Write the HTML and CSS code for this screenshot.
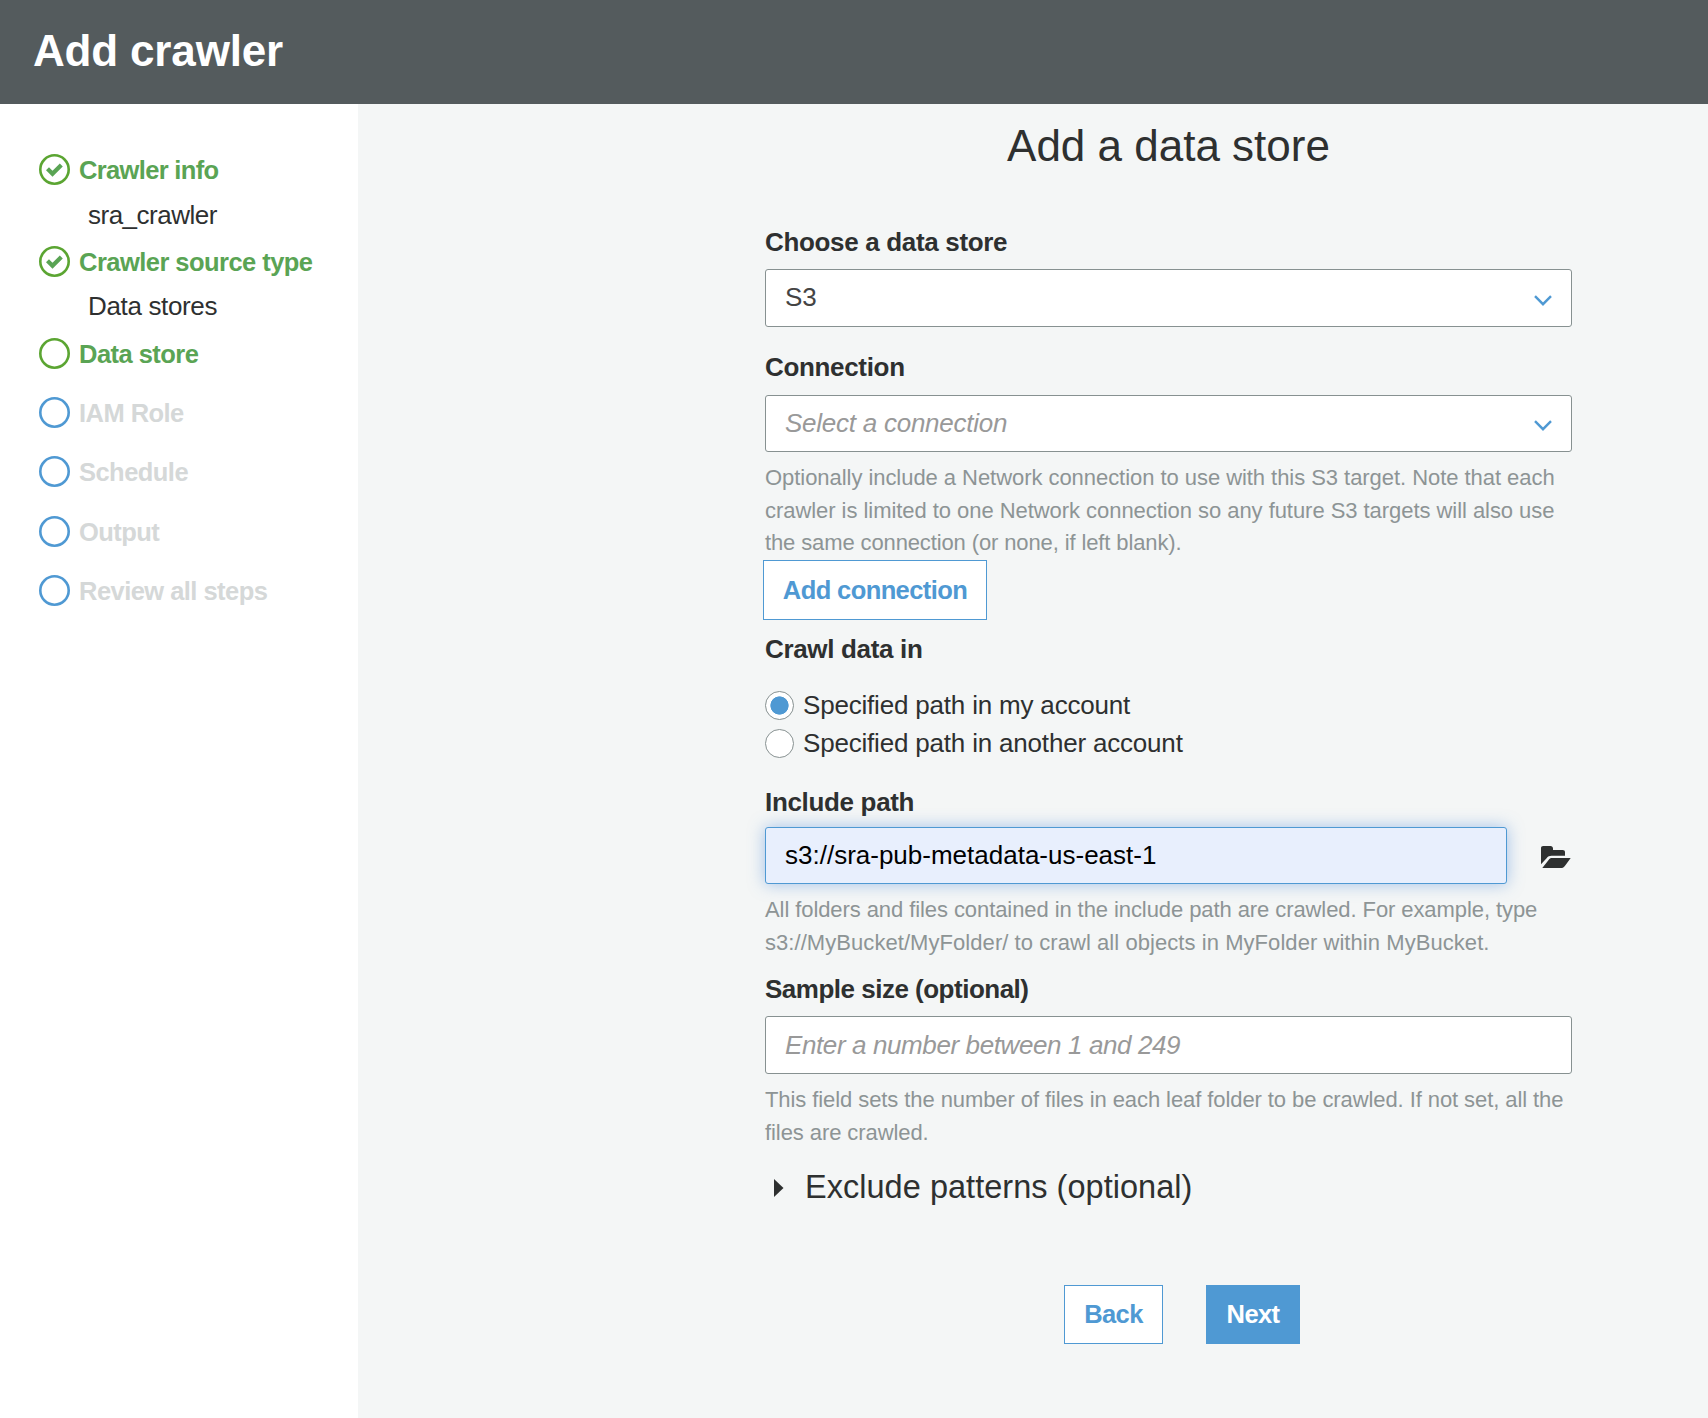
FILE: index.html
```
<!DOCTYPE html>
<html lang="en">
<head>
<meta charset="utf-8">
<title>Add crawler</title>
<link rel="stylesheet" href="styles.css">
</head>
<body>
<header class="topbar"><h1 class="topbar-title">Add crawler</h1></header>
<div class="layout">
  <nav class="steps">
    <div class="step done">
      <svg class="step-icon" viewBox="0 0 31 31"><circle cx="15.5" cy="15.5" r="14.2"/><path class="tick" d="M8.500 14.800l5 5 8.800-8.800"/></svg>
      <span class="w-info">Crawler info</span>
    </div>
    <div class="step-value w-name">sra_crawler</div>
    <div class="step done">
      <svg class="step-icon" viewBox="0 0 31 31"><circle cx="15.5" cy="15.5" r="14.2"/><path class="tick" d="M8.500 14.800l5 5 8.800-8.800"/></svg>
      <span>Crawler source type</span>
    </div>
    <div class="step-value">Data stores</div>
    <div class="step done current">
      <svg class="step-icon" viewBox="0 0 31 31"><circle cx="15.5" cy="15.5" r="14.2"/></svg>
      <span>Data store</span>
    </div>
    <div class="step pending">
      <svg class="step-icon" viewBox="0 0 31 31"><circle cx="15.5" cy="15.5" r="14.2"/></svg>
      <span>IAM Role</span>
    </div>
    <div class="step pending">
      <svg class="step-icon" viewBox="0 0 31 31"><circle cx="15.5" cy="15.5" r="14.2"/></svg>
      <span>Schedule</span>
    </div>
    <div class="step pending">
      <svg class="step-icon" viewBox="0 0 31 31"><circle cx="15.5" cy="15.5" r="14.2"/></svg>
      <span>Output</span>
    </div>
    <div class="step pending">
      <svg class="step-icon" viewBox="0 0 31 31"><circle cx="15.5" cy="15.5" r="14.2"/></svg>
      <span>Review all steps</span>
    </div>
  </nav>
  <main class="content">
    <form class="form">
      <h2 class="form-title">Add a data store</h2>

      <label class="label first">Choose a data store</label>
      <div class="field select tall">
        <span class="select-value">S3</span>
        <svg class="chevron" viewBox="0 0 18 11"><path d="M1 1.2l8 8 8-8"/></svg>
      </div>

      <label class="label connection">Connection</label>
      <div class="field select">
        <span class="placeholder">Select a connection</span>
        <svg class="chevron" viewBox="0 0 18 11"><path d="M1 1.2l8 8 8-8"/></svg>
      </div>
      <p class="help">Optionally include a Network connection to use with this S3 target. Note that each<br>crawler is limited to one Network connection so any future S3 targets will also use<br><span class="tight">the same connection (or none, if left blank).</span></p>
      <button type="button" class="button add">Add connection</button>

      <label class="label crawl">Crawl data in</label>
      <div class="radios">
        <div class="radio"><span class="radio-mark checked"></span><span>Specified path in my account</span></div>
        <div class="radio"><span class="radio-mark"></span><span>Specified path in another account</span></div>
      </div>

      <label class="label include">Include path</label>
      <div class="path-row">
        <div class="field focused">s3://sra-pub-metadata-us-east-1</div>
        <svg class="folder" viewBox="0 0 30 22"><path d="M0 18.2V2.2C0 .8.8 0 2.2 0h7.3C11 0 12 1 12 2.4V4h9.6C23.200 4 24 4.800 24 6.200V9.800H10.500C8.400 9.800 7 10.600 5.600 12.200Z"/><path d="M1.300 22 7.600 13.900C8.600 12.600 9.500 12 11 12H29.700L24.600 18.900C22.900 21.200 21.800 22 19.600 22Z"/></svg>
      </div>
      <p class="help files">All folders and files contained in the include path are crawled. For example, type<br><span class="loose">s3://MyBucket/MyFolder/ to crawl all objects in MyFolder within MyBucket.</span></p>

      <label class="label sample">Sample size (optional)</label>
      <div class="field tall"><span class="placeholder number">Enter a number between 1 and 249</span></div>
      <p class="help files">This field sets the number of files in each leaf folder to be crawled. If not set, all the<br>files are crawled.</p>

      <div class="exclude">
        <svg class="caret" viewBox="0 0 10 18"><path d="M0 0l9.500 9L0 18z"/></svg>
        <span>Exclude patterns (optional)</span>
      </div>

      <div class="actions">
        <button type="button" class="button back">Back</button>
        <button type="button" class="button next">Next</button>
      </div>
    </form>
  </main>
</div>
</body>
</html>
```
FILE: styles.css
```
* {
  box-sizing: border-box;
}

body {
  margin: 0;
  background: #f4f6f6;
  color: #2e3030;
  font-family: "Liberation Sans", Arial, sans-serif;
  font-size: 26px;
  min-height: 1418px;
  display: flex;
  flex-direction: column;
}

h1,
h2,
p {
  margin: 0;
}

.topbar {
  height: 104px;
  padding-left: 33px;
  background: #545b5d;
}

.topbar-title {
  color: #fff;
  font-size: 44px;
  line-height: 101px;
  letter-spacing: -0.17px;
}

.layout {
  flex: 1;
  display: flex;
}

.steps {
  width: 358px;
  padding: 43px 0 0 39px;
  background: #fff;
}

.step {
  display: flex;
  align-items: center;
  gap: 9px;
  height: 45.8px;
  font-size: 25.5px;
  font-weight: bold;
  letter-spacing: -0.54px;
  line-height: 32px;
  white-space: nowrap;
}

.step span {
  padding-top: 1px;
}

.step-icon {
  width: 31px;
  height: 31px;
  fill: none;
  stroke: #5ba532;
  stroke-width: 2.6;
}

.step-icon .tick {
  stroke: #5aa454;
  stroke-width: 4.2;
}

.done {
  color: #5aa454;
}

.w-info {
  letter-spacing: -0.66px;
}

.current {
  margin-bottom: 7px;
}

.pending {
  height: 59.3px;
  color: #d5d8d8;
}

.pending .step-icon {
  stroke: #4f99d3;
}

.step-value {
  height: 45.8px;
  line-height: 45.8px;
  padding-left: 49px;
  letter-spacing: -0.35px;
}

.w-name {
  letter-spacing: -0.5px;
}

.content {
  flex: 1;
  padding: 17px 136px 0 407px;
}

.form {
  width: 807px;
}

.form-title {
  font-size: 44px;
  font-weight: normal;
  line-height: 50px;
  text-align: center;
}

.label {
  display: block;
  font-weight: bold;
  line-height: 36px;
  letter-spacing: -0.33px;
}

.label.first {
  margin: 53px 0 9px;
}

.label.connection {
  margin: 22px 0 10px;
}

.label.crawl {
  margin: 11px 0 19px;
}

.label.include {
  margin: 22px 0 7px;
}

.label.sample {
  margin: 13px 0 9px;
  letter-spacing: -0.5px;
}

.field {
  height: 57px;
  padding: 0 19px;
  display: flex;
  align-items: center;
  border: 1px solid #879191;
  border-radius: 3px;
  background: #fff;
}

.tall {
  height: 58px;
}

.select {
  justify-content: space-between;
}

.select-value {
  padding-bottom: 2px;
  color: #444;
}

.placeholder {
  color: #999;
  font-style: italic;
  letter-spacing: -0.25px;
}

.number {
  letter-spacing: -0.39px;
}

.chevron {
  width: 18px;
  height: 11px;
  margin-top: 4px;
  fill: none;
  stroke: #4f99d3;
  stroke-width: 2.4;
}

.help {
  margin: 10px 0 -1px;
  color: #8d9495;
  font-size: 22px;
  line-height: 32.5px;
  letter-spacing: -0.05px;
  white-space: nowrap;
}

.help.files {
  letter-spacing: -0.083px;
}

.tight {
  letter-spacing: -0.12px;
}

.loose {
  letter-spacing: 0.06px;
}

.button {
  height: 59px;
  padding: 0;
  border: 1px solid #4f99d3;
  background: #fff;
  color: #4f99d3;
  font: bold 25.5px "Liberation Sans", Arial, sans-serif;
  letter-spacing: -0.6px;
}

.add {
  display: block;
  width: 224px;
  height: 60px;
  margin: 1.5px 0 0 -2px;
}

.radio {
  display: flex;
  align-items: center;
  gap: 9px;
  height: 38px;
  letter-spacing: -0.19px;
}

.radio-mark {
  width: 29px;
  height: 29px;
  border: 1px solid #879191;
  border-radius: 50%;
  background: #fff;
}

.checked {
  background: radial-gradient(circle, #4f99d3 8.8px, #fff 9.4px);
}

.path-row {
  display: flex;
  align-items: center;
  justify-content: space-between;
}

.focused {
  width: 742px;
  border-color: #4f99d3;
  background: #e8effd;
  box-shadow: 0 0 16px rgba(79, 140, 220, 0.5);
  color: #000;
}

.folder {
  width: 30px;
  height: 22px;
  margin: 3px 1px 0 0;
  fill: #2e3030;
}

.exclude {
  display: flex;
  align-items: center;
  gap: 21px;
  margin-top: 17px;
  padding-left: 9px;
  font-size: 32.5px;
  line-height: 44px;
  letter-spacing: 0.03px;
}

.caret {
  width: 10px;
  height: 18px;
  margin-top: 1px;
  fill: #2e3030;
}

.actions {
  display: flex;
  gap: 43px;
  margin: 76px 0 0 299px;
}

.back {
  width: 99px;
}

.next {
  width: 94px;
  background: #4f99d3;
  color: #fff;
}
```
